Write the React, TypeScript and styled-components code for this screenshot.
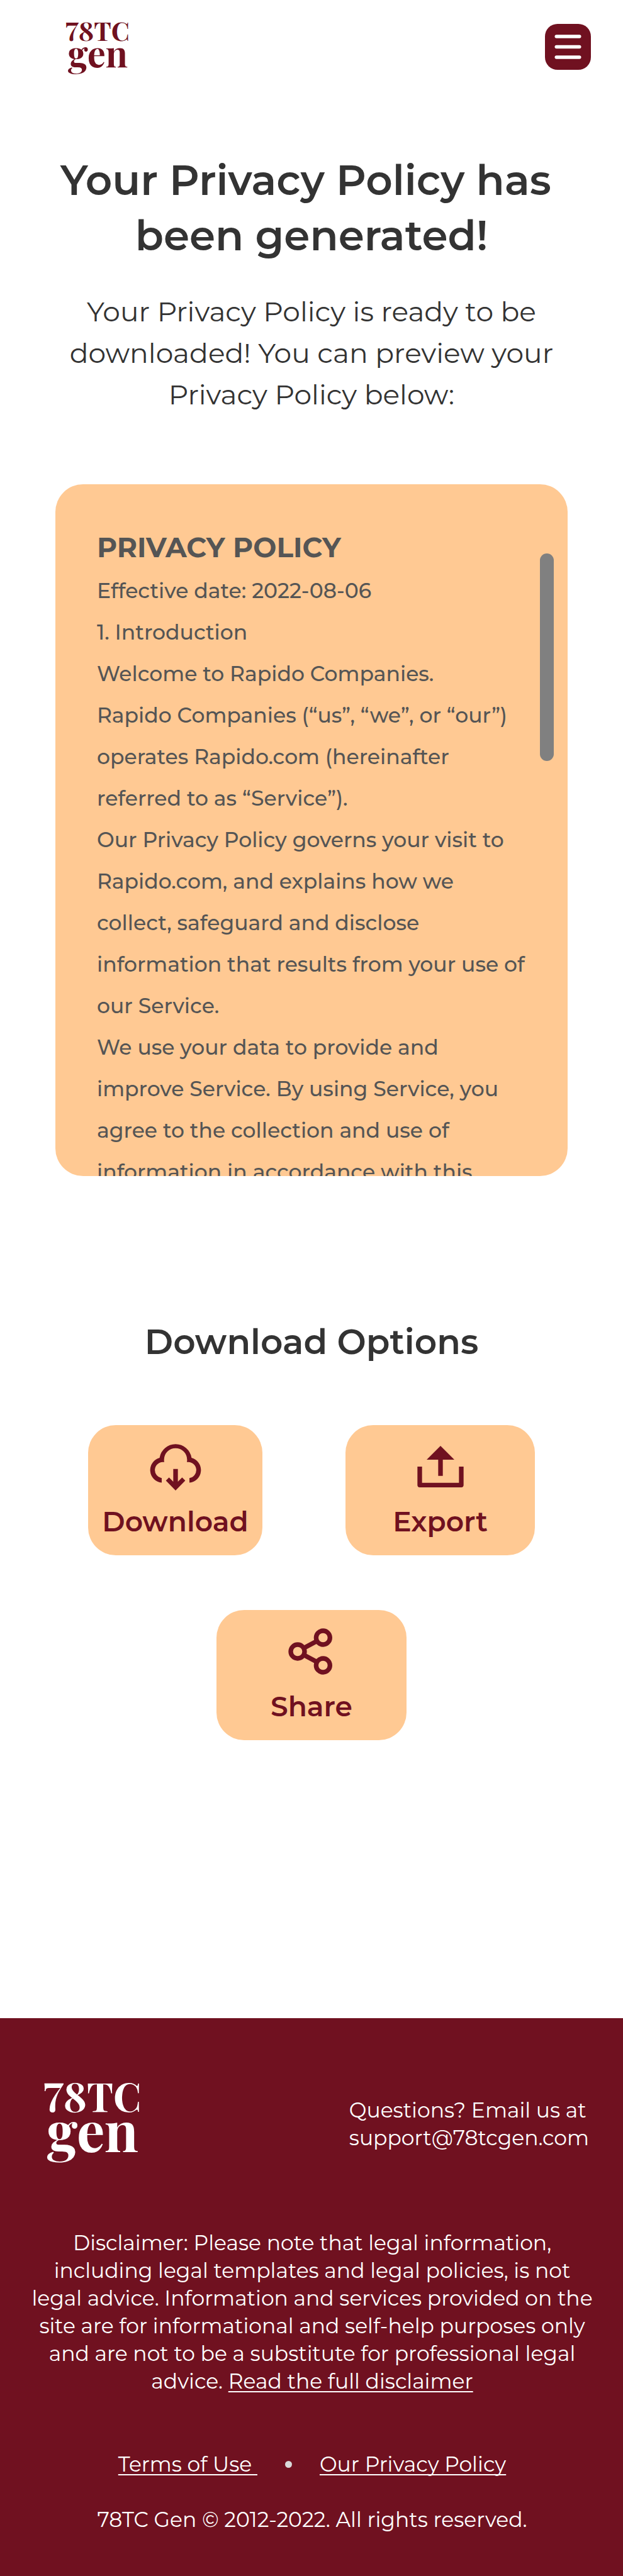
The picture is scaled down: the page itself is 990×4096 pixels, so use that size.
import React from "react";
import styled, { createGlobalStyle } from "styled-components";

const maroon = "#701120";
const peach = "#ffc993";
const ink = "#333333";

const GlobalStyle = createGlobalStyle`
  *, *::before, *::after { box-sizing: border-box; }
  body {
    margin: 0;
    background: #ffffff;
    color: ${ink};
    font-family: Montserrat, Inter, "Open Sans", sans-serif;
  }
  h1, h2, h3, p { margin: 0; }
`;

const Page = styled.div`
  display: flex;
  flex-direction: column;
  min-height: 100vh;
`;

const Header = styled.header`
  display: flex;
  align-items: flex-start;
  justify-content: space-between;
  padding: 33px 51px 0 104px;
`;

const HomeLink = styled.a`
  display: block;
  color: ${maroon};
`;

const LogoSvg = styled.svg<{ $width: number }>`
  display: block;
  width: ${({ $width }) => $width}px;
  height: auto;
  overflow: visible;
  fill: currentColor;
  font-family: "Playfair Display", "Liberation Serif", serif;
  font-variant-numeric: lining-nums;
  font-weight: 700;
`;

const MenuButton = styled.button`
  width: 73px;
  height: 73px;
  margin-top: 5px;
  padding: 0;
  border: 0;
  border-radius: 20px;
  background: ${maroon};
  cursor: pointer;

  svg {
    display: block;
    width: 100%;
  }
`;

const Main = styled.main`
  flex: 1;
  display: flex;
  flex-direction: column;
  align-items: center;
  padding: 121px 88px 0;
`;

const Title = styled.h1`
  max-width: 814px;
  font-size: 66px;
  font-weight: 600;
  line-height: 88px;
  text-align: center;
`;

const Lead = styled.p`
  max-width: 800px;
  margin-top: 43px;
  font-size: 44px;
  font-weight: 400;
  line-height: 66px;
  text-align: center;
`;

const PolicyCard = styled.section`
  display: flex;
  align-self: stretch;
  height: 1100px;
  margin-top: 110px;
  padding: 0 22px 0 66px;
  border-radius: 44px;
  background: ${peach};
  color: #555555;
  overflow: hidden;
`;

const PolicyText = styled.div`
  flex: 1;
  padding: 64px 16px 0 0;
  overflow-y: auto;
  scrollbar-width: none;
  font-size: 33px;
  font-weight: 500;
  line-height: 66px;
`;

const PolicyHeading = styled.h2`
  font-size: 44px;
  font-weight: 700;
  line-height: 72px;
`;

const ScrollThumb = styled.div`
  width: 22px;
  height: 330px;
  margin-top: 110px;
  border-radius: 11px;
  background: #808080;
`;

const OptionsTitle = styled.h2`
  margin-top: 231px;
  font-size: 55px;
  font-weight: 600;
  line-height: 66px;
  text-align: center;
`;

const Options = styled.div`
  display: flex;
  flex-wrap: wrap;
  justify-content: center;
  gap: 87px 132px;
  margin-top: 99px;
`;

const OptionButton = styled.button<{ $width: number }>`
  display: flex;
  flex-direction: column;
  align-items: center;
  gap: 17px;
  width: ${({ $width }) => $width}px;
  padding: 22px 0 27px;
  border: 0;
  border-radius: 44px;
  background: ${peach};
  color: ${maroon};
  font-family: inherit;
  font-size: 44px;
  font-weight: 600;
  line-height: 53px;
  cursor: pointer;

  svg {
    width: 88px;
    height: 88px;
    fill: currentColor;
  }
`;

const Footer = styled.footer`
  display: flex;
  flex-direction: column;
  padding: 100px 47px 68px 49px;
  background: ${maroon};
  color: #ffffff;
  font-size: 33px;
  line-height: 44px;
  text-align: center;
`;

const FooterTop = styled.div`
  display: flex;
  align-items: center;
  justify-content: space-between;
  padding: 0 7px 0 20px;
`;

const Contact = styled.p`
  text-align: left;
`;

const Disclaimer = styled.p`
  margin-top: 99px;
`;

const FooterLink = styled.a`
  color: inherit;
  text-decoration: underline;
  text-decoration-thickness: 2px;
  text-underline-offset: 4px;
  text-decoration-skip-ink: none;
  white-space: pre;
`;

const FooterNav = styled.nav`
  display: flex;
  align-items: center;
  justify-content: center;
  gap: 44px;
  margin-top: 88px;
`;

const Dot = styled.span`
  width: 11px;
  height: 11px;
  border-radius: 50%;
  background: #d9d9d9;
`;

const Copyright = styled.p`
  margin-top: 44px;
`;

function Logo({ width }: { width: number }) {
  return (
    <LogoSvg $width={width} viewBox="0 0 110 97" role="img" aria-label="78TC gen">
      <text x="0" y="35" fontSize="45">78TC</text>
      <text x="4" y="81" fontSize="63">gen</text>
    </LogoSvg>
  );
}

function MenuIcon() {
  return (
    <svg viewBox="0 0 80 80" fill="#ffffff" aria-hidden="true">
      <rect x="17" y="19" width="46" height="6" rx="3" />
      <rect x="17" y="37" width="46" height="6" rx="3" />
      <rect x="17" y="55" width="46" height="6" rx="3" />
    </svg>
  );
}

function CloudIcon() {
  return (
    <svg viewBox="0 0 24 24" aria-hidden="true">
      <path d="M5.08 8.19A7 7 0 0 1 18.92 8.19A5.5 5.5 0 0 1 18 18.98V16.96A3.5 3.5 0 0 0 17.5 10H16.9C17 9.7 17 9.3 17 9A5 5 0 0 0 7 9C7 9.3 7 9.7 7.1 10H6.5A3.5 3.5 0 0 0 6 16.96V18.98A5.5 5.5 0 0 1 5.08 8.19Z" />
      <path d="M11 13h2v5.55l1.83-1.85 1.37 1.4L12 22.35 7.8 18.1l1.37-1.4L11 18.55Z" />
    </svg>
  );
}

function ExportIcon() {
  return (
    <svg viewBox="0 0 24 24" aria-hidden="true">
      <path d="M12 3L18 9H13V16H11V9H6Z" />
      <path d="M2 12H4V19H20V12H22V20A1 1 0 0 1 21 21H3A1 1 0 0 1 2 20Z" />
    </svg>
  );
}

function ShareIcon() {
  return (
    <svg viewBox="0 0 24 24" aria-hidden="true">
      <g fill="none" stroke="currentColor" strokeWidth="2">
        <circle cx="6" cy="12" r="3" />
        <circle cx="17" cy="6" r="3" />
        <circle cx="17" cy="18" r="3" />
        <path d="M8.7 10.5L14.3 7.5M8.7 13.5L14.3 16.5" />
      </g>
    </svg>
  );
}

const options = [
  { label: "Download", width: 277, Icon: CloudIcon },
  { label: "Export", width: 301, Icon: ExportIcon },
  { label: "Share", width: 302, Icon: ShareIcon },
];

const policy = [
  "Effective date: 2022-08-06",
  "1. Introduction",
  "Welcome to Rapido Companies.",
  "Rapido Companies (“us”, “we”, or “our”) operates Rapido.com (hereinafter referred to as “Service”).",
  "Our Privacy Policy governs your visit to Rapido.com, and explains how we collect, safeguard and disclose information that results from your use of our Service.",
  "We use your data to provide and improve Service. By using Service, you agree to the collection and use of information in accordance with this",
];

export default function App() {
  return (
    <>
      <GlobalStyle />
      <Page>
        <Header>
          <HomeLink href="#"><Logo width={101} /></HomeLink>
          <MenuButton type="button" aria-label="Menu"><MenuIcon /></MenuButton>
        </Header>
        <Main>
          <Title>Your Privacy Policy has&nbsp;<br />been generated!</Title>
          <Lead>
            Your Privacy Policy is ready to be downloaded! You can preview your
            Privacy Policy below:
          </Lead>
          <PolicyCard aria-label="Policy preview">
            <PolicyText tabIndex={0}>
              <PolicyHeading>PRIVACY POLICY</PolicyHeading>
              {policy.map((text) => <p key={text}>{text}</p>)}
            </PolicyText>
            <ScrollThumb />
          </PolicyCard>
          <OptionsTitle>Download Options</OptionsTitle>
          <Options>
            {options.map(({ label, width, Icon }) => (
              <OptionButton key={label} type="button" $width={width}>
                <Icon />
                {label}
              </OptionButton>
            ))}
          </Options>
        </Main>
        <Footer>
          <FooterTop>
            <Logo width={154} />
            <Contact>
              Questions? Email us at<br />support@78tcgen.com
            </Contact>
          </FooterTop>
          <Disclaimer>
            Disclaimer: Please note that legal information, including legal
            templates and legal policies, is not legal advice. Information and
            services provided on the site are for informational and self-help
            purposes only and are not to be a substitute for professional legal
            advice. <FooterLink href="#disclaimer">Read the full disclaimer</FooterLink>
          </Disclaimer>
          <FooterNav>
            <FooterLink href="#terms">{"Terms of Use "}</FooterLink>
            <Dot />
            <FooterLink href="#privacy">Our Privacy Policy</FooterLink>
          </FooterNav>
          <Copyright>78TC Gen © 2012-2022. All rights reserved.</Copyright>
        </Footer>
      </Page>
    </>
  );
}
